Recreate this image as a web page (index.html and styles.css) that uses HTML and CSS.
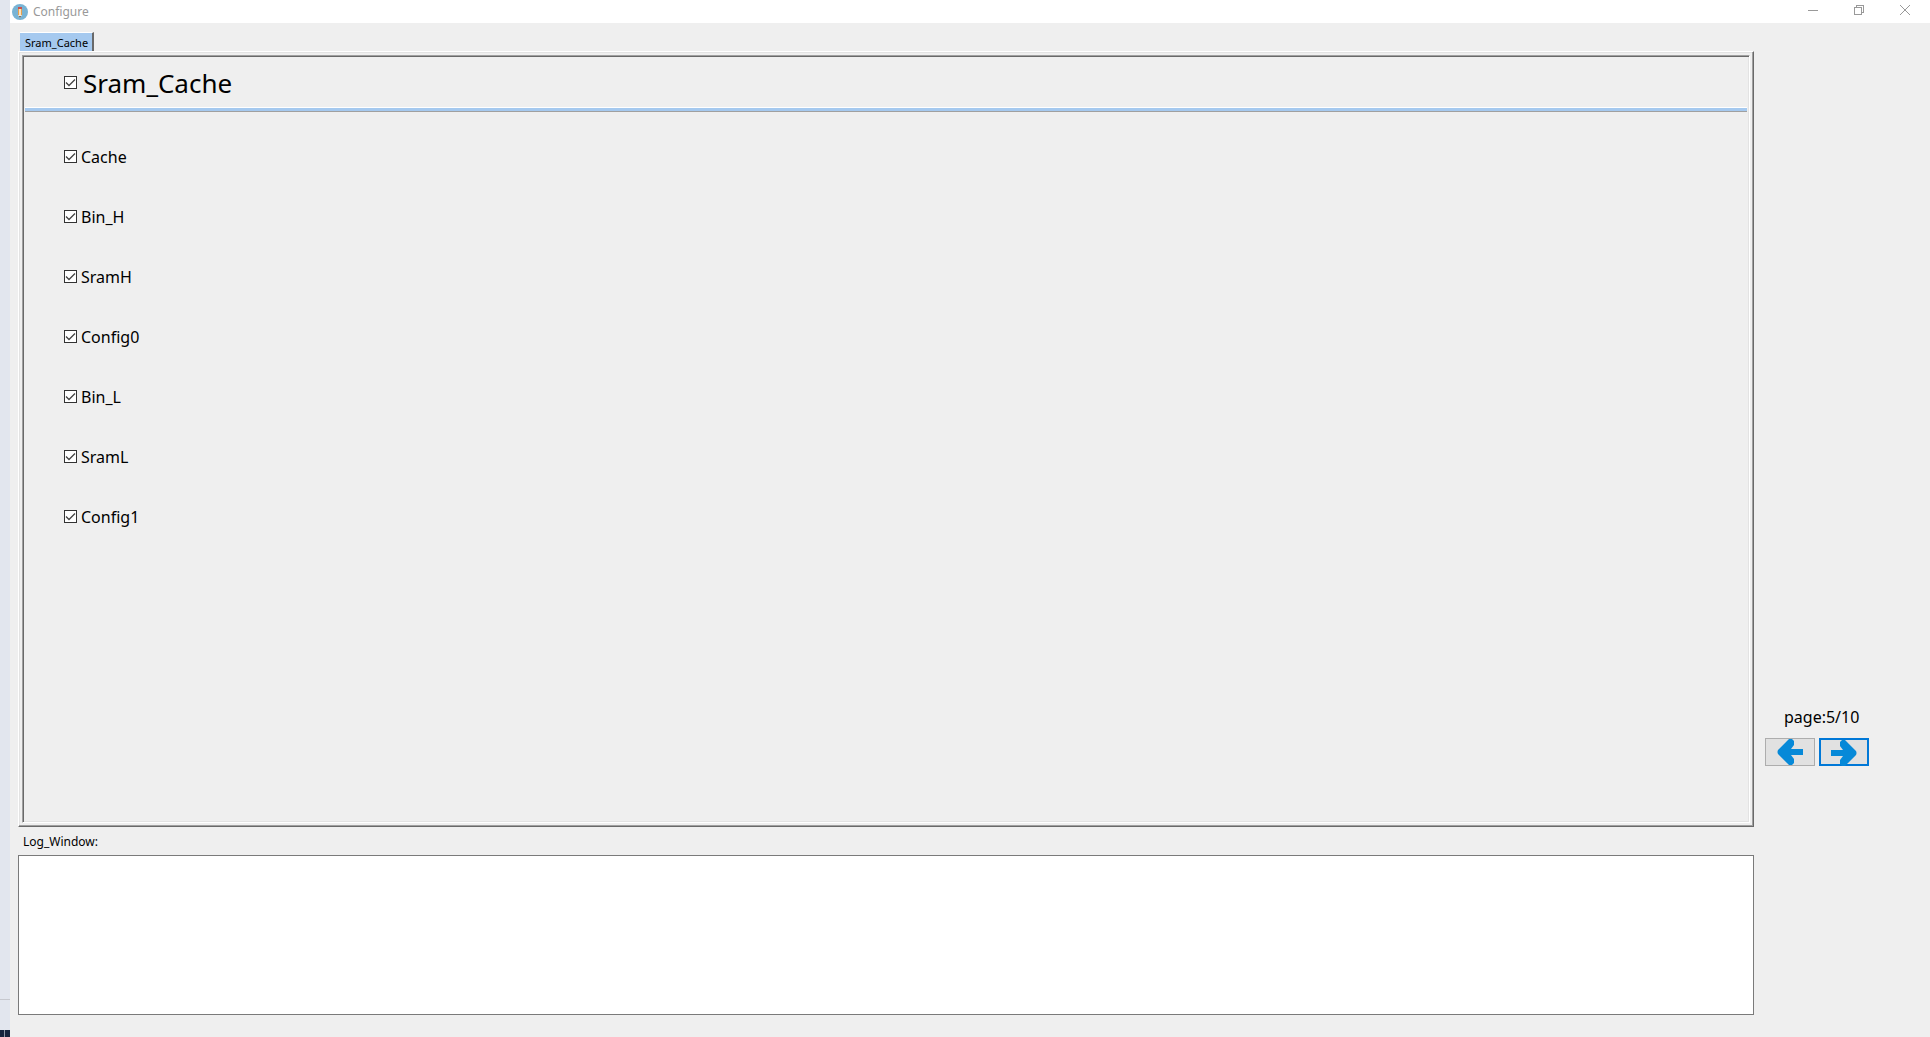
FILE: index.html
```html
<!DOCTYPE html>
<html lang="en">
<head>
    <meta charset="UTF-8">
    <meta name="viewport" content="width=device-width, initial-scale=1.0">
    <title>Configure</title>
    <link rel="stylesheet" href="styles.css">
</head>
<body>
    <div class="desktop">
        <div class="taskbar"></div>
    </div>
    <div class="window">
        <header class="titlebar">
            <svg class="app-icon" viewBox="0 0 16 16">
                <circle cx="8" cy="8" r="8" fill="#78b3d4"/>
                <path d="M6 3h4v2H6z" fill="#c9524e"/>
                <path d="M6 5h1v6H6z" fill="#e8a04c"/>
                <path d="M7 5h2v6H7z" fill="#f9e3c0"/>
                <path d="M9 5h1v6H9z" fill="#e8a04c"/>
                <path d="M6 11h4l-2 3z" fill="#f4ead8"/>
                <path d="M7 12h2l-1 2z" fill="#5b4a44"/>
            </svg>
            <span class="titlebar-text">Configure</span>
            <button class="window-btn" aria-label="Minimize">
                <svg viewBox="0 0 12 12" shape-rendering="crispEdges"><path d="M1 6.500h10"/></svg>
            </button>
            <button class="window-btn" aria-label="Restore">
                <svg viewBox="0 0 12 12" shape-rendering="crispEdges"><path d="M1.500 3.500h7v7h-7zM3.500 3V1.500h7v7H9"/></svg>
            </button>
            <button class="window-btn" aria-label="Close">
                <svg viewBox="0 0 12 12"><path d="M1 1l10 10M11 1L1 11"/></svg>
            </button>
        </header>

        <div class="content">
            <main class="main">
                <div class="tabs">
                    <button class="tab">Sram_Cache</button>
                </div>
                <div class="pane">
                    <div class="frame">
                        <div class="group-title">
                            <label class="check check-large"><input type="checkbox" checked><span>Sram_Cache</span></label>
                        </div>
                        <div class="options">
                            <label class="check"><input type="checkbox" checked><span>Cache</span></label>
                            <label class="check"><input type="checkbox" checked><span>Bin_H</span></label>
                            <label class="check"><input type="checkbox" checked><span>SramH</span></label>
                            <label class="check"><input type="checkbox" checked><span>Config0</span></label>
                            <label class="check"><input type="checkbox" checked><span>Bin_L</span></label>
                            <label class="check"><input type="checkbox" checked><span>SramL</span></label>
                            <label class="check"><input type="checkbox" checked><span>Config1</span></label>
                        </div>
                    </div>
                </div>
                <label class="log-label" for="log">Log_Window:</label>
                <textarea class="log" id="log" readonly></textarea>
            </main>

            <aside class="sidebar">
                <div class="page-label">page:5/10</div>
                <div class="page-buttons">
                    <button class="page-btn" aria-label="Previous page">
                        <svg viewBox="0 0 26 26"><path d="M26 10v6H14l3 4v4l-2 2h-3l-2-2L1 15q-1-2 0-4l9-9 2-2h3l2 2v4l-3 4z"/></svg>
                    </button>
                    <button class="page-btn page-btn-active" aria-label="Next page">
                        <svg viewBox="0 0 26 26"><path d="M0 10v6h12l-3 4v4l2 2h3l2-2 9-9q1-2 0-4l-9-9-2-2h-3L9 2v4l3 4z"/></svg>
                    </button>
                </div>
            </aside>
        </div>
    </div>
</body>
</html>
```
FILE: styles.css
```css
* {
    box-sizing: border-box;
}

body {
    display: flex;
    height: 100vh;
    margin: 0;
    background-color: #efefef;
    color: #000;
    font-family: "Noto Sans", sans-serif;
    font-size: 16px;
}

button {
    padding: 0;
    border: none;
    font-family: inherit;
}

/* strip of desktop left of the window */
.desktop {
    display: flex;
    flex-direction: column;
    justify-content: flex-end;
    width: 10px;
    background-color: #e2e6ee;
}

.desktop::before {
    content: "";
    height: 30px;
    border-top: 1px solid #c6c8ce;
}

.taskbar {
    width: 5px;
    height: 7px;
    border-right: 1px solid #8a93a3;
    background-color: #17233d;
    box-shadow: 5px 0 #17233d;
}

.window {
    display: flex;
    flex: 1;
    flex-direction: column;
    position: relative;
    background-color: #efefef;
}

.titlebar {
    display: flex;
    align-items: center;
    height: 23px;
    padding: 0 2px;
    background-color: #fff;
}

.app-icon {
    width: 16px;
    height: 16px;
}

.titlebar-text {
    flex: 1;
    margin-left: 5px;
    color: #999;
    font-size: 12px;
}

.window-btn {
    align-self: flex-start;
    width: 46px;
    height: 20px;
    background: none;
}

.window-btn svg {
    display: block;
    width: 12px;
    height: 12px;
    margin: 0 auto;
    fill: none;
    stroke: #999;
}

.content {
    display: flex;
    flex: 1;
}

.main {
    display: flex;
    flex: 1;
    flex-direction: column;
    padding: 9px 0 22px 8px;
}

.tabs {
    display: flex;
    padding-left: 2px;
}

.tab {
    height: 19px;
    padding: 0 4px 0 5px;
    border-top: 1px solid #fff;
    border-right: 2px solid #696969;
    background-color: #a5c9ef;
    font-size: 11px;
}

.pane {
    display: flex;
    flex: 1;
    padding: 3px;
    border: 1px solid;
    border-color: #fff #696969 #696969 #fff;
    box-shadow: inset -1px -1px #a0a0a0, inset 1px 1px #e3e3e3;
}

.frame {
    flex: 1;
    border: 1px solid;
    border-color: #a0a0a0 #fff #fff #a0a0a0;
    box-shadow: inset 1px 1px #696969, inset -1px -1px #e3e3e3;
}

.group-title {
    height: 56px;
    margin: 0 2px;
    padding: 1px 0 0 39px;
    border-bottom: 1px solid #a0a0a0;
    box-shadow: inset 0 -3px #a5c9ef, inset 0 -4px #fff;
}

.options {
    display: flex;
    flex-direction: column;
    gap: 35px;
    padding: 32px 0 0 41px;
}

.check {
    display: flex;
    align-items: center;
    gap: 4px;
    height: 25px;
}

.check-large {
    gap: 6px;
    height: 51px;
    font-size: 26px;
}

.check input {
    width: 13px;
    height: 13px;
    margin: 0;
    appearance: none;
    border: 1px solid #333;
    background: #fff url("data:image/svg+xml,%3Csvg xmlns='http://www.w3.org/2000/svg' viewBox='0 0 11 11'%3E%3Cpath d='M1 5.500l3 3L10 2.500' fill='none' stroke='%23444' stroke-width='1.300'/%3E%3C/svg%3E");
}

.log-label {
    padding: 7px 0 5px 5px;
    font-size: 12px;
    line-height: 16px;
}

.log {
    width: 100%;
    height: 160px;
    border: 1px solid #7a7a7a;
    background-color: #fff;
    resize: none;
    outline: none;
}

.sidebar {
    display: flex;
    flex-direction: column;
    justify-content: flex-end;
    width: 176px;
    padding: 0 0 271px 11px;
}

.page-label {
    margin-bottom: 9px;
    padding-left: 19px;
    line-height: 24px;
}

.page-buttons {
    display: flex;
    gap: 4px;
}

.page-btn {
    width: 50px;
    height: 28px;
    border: 1px solid #adadad;
    background-color: #e1e1e1;
}

.page-btn-active {
    border: 2px solid #0078d7;
}

.page-btn svg {
    display: block;
    width: 26px;
    height: 26px;
    margin: 0 auto;
    fill: #0689d8;
}
```
